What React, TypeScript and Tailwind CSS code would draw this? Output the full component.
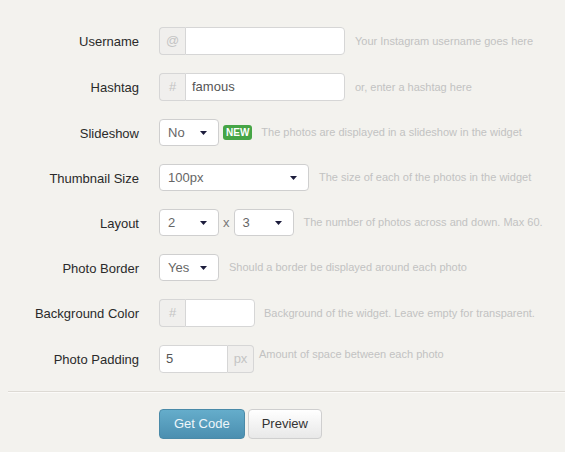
import React from "react";

const font = { fontFamily: '"Liberation Sans", Arial, sans-serif' };

function Arrow() {
  return (
    <svg width="7" height="4" viewBox="0 0 7 4" className="block">
      <path d="M0 0 H7 L3.5 4 Z" fill="#1c1c3c" />
    </svg>
  );
}

function Select({ value, w }: { value: string; w: string }) {
  return (
    <div
      className={`${w} h-[27px] bg-white border border-[#cfcfcf] rounded-[4px] flex items-center justify-between pl-[8px] pr-[11px] text-[13px] text-[#666] shrink-0`}
    >
      <span>{value}</span>
      <Arrow />
    </div>
  );
}

function Help({ children, className = "" }: { children: React.ReactNode; className?: string }) {
  return <span className={`text-[11px] text-[#c2c2c2] whitespace-nowrap ${className}`}>{children}</span>;
}

function Row({ label, children }: { label: string; children: React.ReactNode }) {
  return (
    <div className="flex items-center mb-[18px]">
      <div className="w-[139px] shrink-0 text-right text-[13px] text-[#2a2a2a] pt-[2px]">{label}</div>
      <div className="ml-[20px] flex items-center">{children}</div>
    </div>
  );
}

function Addon({ children, side }: { children: React.ReactNode; side: "l" | "r" }) {
  return (
    <div
      className={`w-[26px] h-[28px] shrink-0 bg-[#f0efed] border border-[#d6d6d6] flex items-center justify-center text-[13px] text-[#c4c4c4] ${
        side === "l" ? "rounded-l-[4px] border-r-0" : "rounded-r-[4px] border-l-0"
      }`}
    >
      {children}
    </div>
  );
}

function Input({ value = "", w, side }: { value?: string; w: string; side: "l" | "r" }) {
  return (
    <div
      className={`${w} h-[28px] shrink-0 bg-white border border-[#d6d6d6] flex items-center px-[6px] text-[13px] text-[#555] ${
        side === "l" ? "rounded-l-[4px]" : "rounded-r-[4px]"
      }`}
    >
      {value}
    </div>
  );
}

export default function App() {
  return (
    <div className="w-[565px] h-[452px] bg-[#f3f2ee] overflow-hidden pt-[27px]" style={font}>
      <Row label="Username">
        <Addon side="l">@</Addon>
        <Input w="w-[160px]" side="r" />
        <Help className="ml-[10px] pt-[1px]">Your Instagram username goes here</Help>
      </Row>
      <Row label="Hashtag">
        <Addon side="l">#</Addon>
        <Input w="w-[160px]" side="r" value="famous" />
        <Help className="ml-[10px] pt-[1px]">or, enter a hashtag here</Help>
      </Row>
      <Row label="Slideshow">
        <Select value="No" w="w-[60px]" />
        <span className="ml-[4px] h-[15px] px-[3px] bg-[#46a546] rounded-[3px] text-white text-[10px] font-bold flex items-center leading-none">
          NEW
        </span>
        <Help className="ml-[9px]">The photos are displayed in a slideshow in the widget</Help>
      </Row>
      <Row label="Thumbnail Size">
        <Select value="100px" w="w-[150px]" />
        <Help className="ml-[10px]">The size of each of the photos in the widget</Help>
      </Row>
      <Row label="Layout">
        <Select value="2" w="w-[60px]" />
        <span className="mx-[4px] text-[13px] text-[#777]">x</span>
        <Select value="3" w="w-[60px]" />
        <Help className="ml-[10px]">The number of photos across and down. Max 60.</Help>
      </Row>
      <Row label="Photo Border">
        <Select value="Yes" w="w-[60px]" />
        <Help className="ml-[10px]">Should a border be displayed around each photo</Help>
      </Row>
      <Row label="Background Color">
        <Addon side="l">#</Addon>
        <Input w="w-[70px]" side="r" />
        <Help className="ml-[9px] pt-[1px]">Background of the widget. Leave empty for transparent.</Help>
      </Row>
      <div className="flex items-center mb-[18px]">
        <div className="w-[139px] shrink-0 text-right text-[13px] text-[#2a2a2a] pt-[2px]">Photo Padding</div>
        <div className="ml-[20px] flex items-start">
          <Input w="w-[69px]" side="l" value="5" />
          <Addon side="r">px</Addon>
          <Help className="ml-[5px] leading-[18px]">Amount of space between each photo</Help>
        </div>
      </div>
      <div className="ml-[8px] mt-[1px] border-t border-[#dddad4] shadow-[0_1px_0_#fbfaf8]" />
      <div className="mt-[17px] ml-[159px] flex gap-[3px]">
        <button className="h-[30px] px-[14px] rounded-[4px] border border-[#4a8aa8] bg-gradient-to-b from-[#65adcb] to-[#4b8fb0] text-[13px] text-[#eef6fa]">
          Get Code
        </button>
        <button className="h-[30px] px-[13px] rounded-[4px] border border-[#cfcfcf] bg-gradient-to-b from-white to-[#e8e8e8] text-[13px] text-[#333]">
          Preview
        </button>
      </div>
    </div>
  );
}
